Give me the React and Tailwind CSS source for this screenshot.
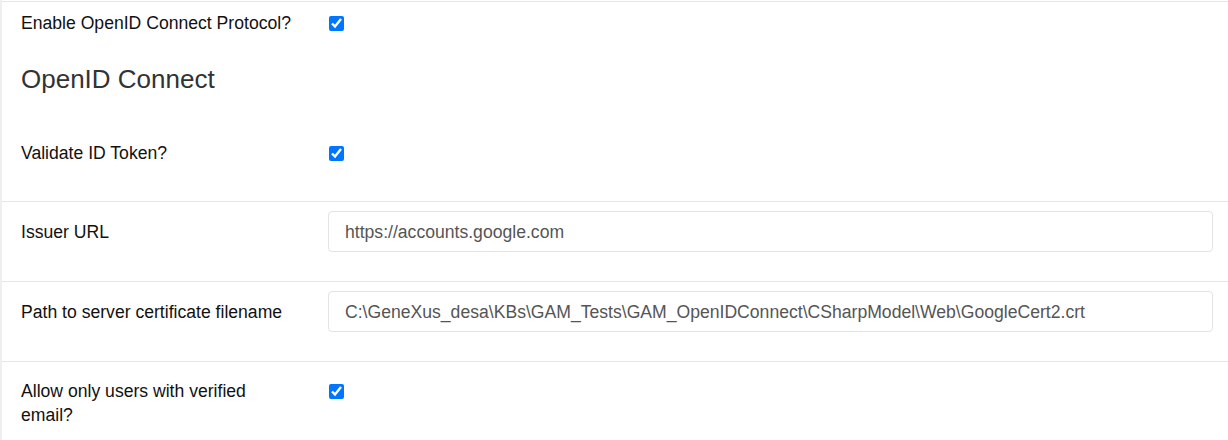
import React from 'react';

const font = { fontFamily: '"Liberation Sans", Arial, sans-serif' };

function Check() {
  return (
    <input
      type="checkbox"
      checked
      readOnly
      className="ml-px w-[15px] h-[15px] accent-[#0075ff]"
    />
  );
}

function Field({ value }) {
  return (
    <div className="flex-1 h-[41px] mr-[15px] flex items-center px-4 rounded-[4px] border border-[#e3e3e3] bg-white text-[17.6px] text-[#555] whitespace-nowrap overflow-hidden">
      {value}
    </div>
  );
}

export default function App() {
  return (
    <div className="w-[1228px] h-[440px] bg-white overflow-hidden" style={font}>
      <div className="h-full border-l-2 border-[#efefef] flex flex-col">
        <div className="h-px bg-white" />
        <div className="border-t border-[#e6e6e6]">
          {/* Enable row */}
          <div className="flex items-center pt-[9px] pl-[19px] text-[17.6px] leading-6 text-[#111]">
            <div className="w-[307px]">Enable OpenID Connect Protocol?</div>
            <Check />
          </div>

          <h2 className="mt-[29px] pl-[19px] text-[26px] leading-[31px] text-[#333]">OpenID Connect</h2>

          {/* Validate row */}
          <div className="flex items-center mt-[46px] mb-[36px] pl-[19px] text-[17.6px] leading-6 text-[#111]">
            <div className="w-[307px]">Validate ID Token?</div>
            <Check />
          </div>

          <div className="border-t border-[#e6e6e6] flex items-center pt-[9px] pb-[29px] pl-[19px] text-[17.6px] leading-6 text-[#111]">
            <div className="w-[307px]">Issuer URL</div>
            <Field value="https://accounts.google.com" />
          </div>

          <div className="border-t border-[#e6e6e6] flex items-center pt-[9px] pb-[29px] pl-[19px] text-[17.6px] leading-6 text-[#111]">
            <div className="w-[307px]">Path to server certificate filename</div>
            <Field value="C:\GeneXus_desa\KBs\GAM_Tests\GAM_OpenIDConnect\CSharpModel\Web\GoogleCert2.crt" />
          </div>

          <div className="border-t border-[#e6e6e6] flex items-start pt-[17px] pl-[19px] text-[17.6px] leading-6 text-[#111]">
            <div className="w-[307px] pr-[33px]">Allow only users with verified email?</div>
            <div className="h-6 flex items-center">
              <Check />
            </div>
          </div>
        </div>
      </div>
    </div>
  );
}
